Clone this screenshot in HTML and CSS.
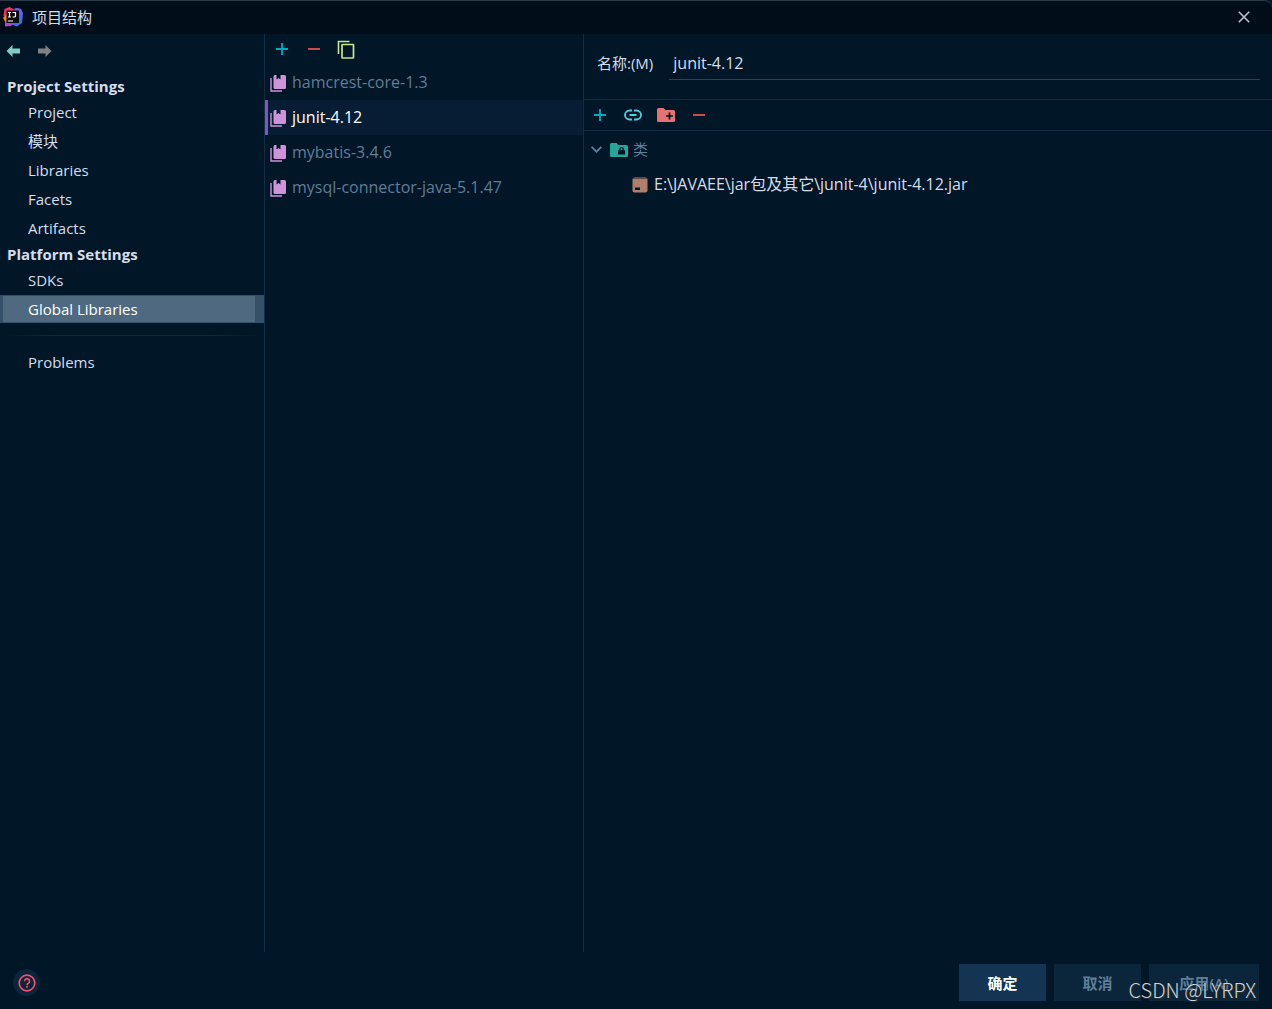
FILE: index.html
```html
<!DOCTYPE html>
<html lang="zh-CN">
<head>
<meta charset="utf-8">
<title>项目结构</title>
<meta name="viewport" content="width=device-width, initial-scale=1">
<link rel="stylesheet" href="styles.css">
</head>
<body>
<svg width="0" height="0" class="sprite" aria-hidden="true">
  <symbol id="plus" viewBox="0 0 12 12"><path d="M6 0v12M0 6h12" stroke="#00acc1" stroke-width="1.8"/></symbol>
  <symbol id="minus" viewBox="0 0 12 12"><path d="M0 6h12" stroke="#e5534f" stroke-width="1.8"/></symbol>
  <symbol id="library" viewBox="0 0 17 18"><path d="M1 4v13h11" fill="none" stroke="#ce93d8" stroke-width="1.4"/><path d="M5 1h1.500v4.500l2-1.500 2 1.500V1h4A1.500 1.500 0 0 1 16 2.500v11a1.500 1.500 0 0 1-1.500 1.500H5a1.500 1.500 0 0 1-1.500-1.500v-11A1.500 1.500 0 0 1 5 1z" fill="#ce93d8"/></symbol>
</svg>
<div class="dialog">
  <header class="titlebar">
    <svg class="logo" width="20" height="20" viewBox="0 0 20 20" aria-hidden="true">
      <path d="M1.500 2l5-2L13 3.500 9 13 .5 9z" fill="#fc3060"/>
      <path d="M0 11l4-4 3 8-4 1z" fill="#fc801d"/>
      <path d="M12 1l6 1 2 4-1 10-5 3.500-7-2.500z" fill="#3b6ff2"/>
      <path d="M13 1l5 1 1.500 6-6-2z" fill="#7c59e8"/>
      <path d="M2 15l3-1 5 3-2 2-6 .5z" fill="#b83bd2"/>
      <path d="M3.500 3.500h12.500v12.500H3.500z" fill="#090909"/>
      <path d="M5 5.500h3M6.500 5.500v4.500M5 10h3M9.500 5.500h3v3.500q0 1-1.300 1H9.500M5 14h5" fill="none" stroke="#fff" stroke-width="1.200"/>
    </svg>
    <h1 class="title">项目结构</h1>
    <button class="icon-btn" type="button" aria-label="关闭">
      <svg width="12" height="12" viewBox="0 0 12 12"><path d="M.8.800l10.400 10.400M11.200.800L.8 11.200" stroke="#b8c3cb" stroke-width="1.600"/></svg>
    </button>
  </header>

  <main class="panes">
    <nav class="sidebar">
      <div class="history">
        <button class="icon-btn" type="button" aria-label="后退"><svg width="14" height="12" viewBox="0 0 14 12"><path d="M0.500 6l6-6v3.500H14v5H6.500V12z" fill="#80cbc4"/></svg></button>
        <button class="icon-btn" type="button" aria-label="前进"><svg width="14" height="12" viewBox="0 0 14 12"><path d="M13.500 6l-6-6v3.500H0v5h7.500V12z" fill="#808080"/></svg></button>
      </div>
      <h2 class="group">Project Settings</h2>
      <ul class="links">
        <li><a class="link" href="#project">Project</a></li>
        <li><a class="link" href="#modules">模块</a></li>
        <li><a class="link" href="#libraries">Libraries</a></li>
        <li><a class="link" href="#facets">Facets</a></li>
        <li><a class="link" href="#artifacts">Artifacts</a></li>
      </ul>
      <h2 class="group">Platform Settings</h2>
      <ul class="links">
        <li><a class="link" href="#sdks">SDKs</a></li>
        <li><a class="link link-active" href="#global" aria-current="page">Global Libraries</a></li>
      </ul>
      <hr class="rule">
      <ul class="links">
        <li><a class="link" href="#problems">Problems</a></li>
      </ul>
    </nav>

    <section class="libraries">
      <div class="toolbar list-toolbar">
        <button class="icon-btn" type="button" aria-label="添加"><svg width="12" height="12"><use href="#plus"/></svg></button>
        <button class="icon-btn" type="button" aria-label="移除"><svg width="12" height="12"><use href="#minus"/></svg></button>
        <button class="icon-btn" type="button" aria-label="复制"><svg width="18" height="19" viewBox="0 0 18 19"><path d="M1.500 14V1.500h11" fill="none" stroke="#c3e88d" stroke-width="1.600"/><rect x="5" y="4.500" width="11.500" height="13.500" rx=".5" fill="none" stroke="#c3e88d" stroke-width="1.700"/></svg></button>
      </div>
      <ul class="rows">
        <li><a class="row" href="#hamcrest"><svg width="17" height="18"><use href="#library"/></svg><span>hamcrest-core-1.3</span></a></li>
        <li><a class="row row-active" href="#junit" aria-current="true"><svg width="17" height="18"><use href="#library"/></svg><span>junit-4.12</span></a></li>
        <li><a class="row" href="#mybatis"><svg width="17" height="18"><use href="#library"/></svg><span>mybatis-3.4.6</span></a></li>
        <li><a class="row" href="#mysql"><svg width="17" height="18"><use href="#library"/></svg><span>mysql-connector-java-5.1.47</span></a></li>
      </ul>
    </section>

    <section class="details">
      <div class="name-row">
        <label for="name">名称:(M)</label>
        <input class="name" id="name" type="text" value="junit-4.12">
      </div>
      <div class="toolbar file-toolbar">
        <button class="icon-btn" type="button" aria-label="添加"><svg width="12" height="12"><use href="#plus"/></svg></button>
        <button class="icon-btn" type="button" aria-label="指定文档 URL"><svg width="18" height="12" viewBox="0 0 18 12"><path d="M8 1.500H5.500a4.500 4.500 0 0 0 0 9H8M10 1.500h2.500a4.500 4.500 0 0 1 0 9H10M5.500 6h7" fill="none" stroke="#4dd0e1" stroke-width="1.800"/></svg></button>
        <button class="icon-btn" type="button" aria-label="排除目录"><svg width="18" height="14" viewBox="0 0 18 14"><path d="M1.500 0h5l2 2h8A1.500 1.500 0 0 1 18 3.500v9a1.500 1.500 0 0 1-1.500 1.500h-15A1.500 1.500 0 0 1 0 12.500v-11A1.500 1.500 0 0 1 1.500 0z" fill="#e57373"/><path d="M12.500 4.500v7M9 8h7" stroke="#011627" stroke-width="1.700"/></svg></button>
        <button class="icon-btn" type="button" aria-label="移除"><svg width="12" height="12"><use href="#minus"/></svg></button>
      </div>
      <ul class="tree">
        <li class="node node-group">
          <svg width="11" height="7" viewBox="0 0 11 7"><path d="M.6.800l4.900 4.900L10.400.800" fill="none" stroke="#5f7e97" stroke-width="1.800"/></svg>
          <svg width="18" height="14" viewBox="0 0 18 14"><path d="M1.500 0h5l2 2h8A1.500 1.500 0 0 1 18 3.500v9a1.500 1.500 0 0 1-1.500 1.500h-15A1.500 1.500 0 0 1 0 12.500v-11A1.500 1.500 0 0 1 1.500 0z" fill="#26a69a"/><path d="M8 7.200h7V11.500H8z" fill="#011627"/><path d="M9.900 8V6.200a1.600 1.600 0 0 1 3.200 0V8" fill="none" stroke="#011627" stroke-width="1.300"/></svg>
          <span>类</span>
        </li>
        <li class="node node-file">
          <svg width="16" height="16" viewBox="0 0 16 16"><rect x=".5" y=".5" width="15" height="15" rx="2" fill="#b07f6c"/><path d="M1 1.500h14" stroke="#5d4a47" stroke-width="1"/><path d="M3 10.500h5v2.500H3z" fill="#011627"/></svg>
          <span>E:\JAVAEE\jar包及其它\junit-4\junit-4.12.jar</span>
        </li>
      </ul>
    </section>
  </main>

  <footer class="footer">
    <button class="help" type="button" aria-label="帮助">
      <svg width="18" height="18" viewBox="0 0 18 18"><circle cx="9" cy="9" r="7.800" fill="none" stroke="#ef5370" stroke-width="1.700"/><path d="M6.500 7.200a2.500 2.500 0 1 1 4 2q-1.500 1-1.500 2" fill="none" stroke="#ef5370" stroke-width="1.600"/><path d="M9 12v1.700" stroke="#ef5370" stroke-width="1.700"/></svg>
    </button>
    <div class="actions">
      <button class="btn btn-primary" type="button">确定</button>
      <button class="btn" type="button">取消</button>
      <button class="btn btn-wide" type="button" disabled>应用(A)</button>
    </div>
    <span class="watermark">CSDN @LYRPX</span>
  </footer>
</div>
</body>
</html>
```
FILE: styles.css
```css
* { box-sizing: border-box; }

body {
  margin: 0;
  background: #011627;
  color: #d6deeb;
  font: 15px/20px "Open Sans", "Noto Sans CJK SC", sans-serif;
}

ul { list-style: none; margin: 0; padding: 0; }
a { color: inherit; text-decoration: none; }
svg { display: block; flex: none; }
.sprite { position: absolute; }

.dialog {
  display: flex;
  flex-direction: column;
  min-height: 100vh;
}

.titlebar {
  display: flex;
  align-items: center;
  gap: 9px;
  height: 34px;
  padding: 0 22px 2px 3px;
  border-top: 1px solid #2b3b45;
  border-top-right-radius: 8px;
  background: #010e1a;
}
.title { flex: 1; margin: 0; font-size: 15px; font-weight: 400; }

.icon-btn {
  display: flex;
  justify-content: center;
  padding: 0;
  border: 0;
  background: none;
}

.panes {
  display: grid;
  grid-template-columns: 265px 319px 1fr;
  flex: 1;
}

.sidebar { border-right: 1px solid #122d42; }
.history {
  display: flex;
  align-items: center;
  gap: 18px;
  height: 34px;
  padding: 0 6px;
  margin-bottom: 7px;
}
.group {
  margin: 0;
  padding: 0 7px;
  font-size: 15px;
  font-weight: 700;
  line-height: 23px;
}
.link {
  display: block;
  height: 28px;
  margin-bottom: 1px;
  padding: 0 25px;
  border: 1px solid transparent;
  border-width: 1px 9px 1px 3px;
  line-height: 26px;
}
.link-active {
  border-color: #34506a;
  background: #4f6a80;
  background-clip: padding-box;
  color: #fff;
}
.rule {
  height: 1px;
  margin: 12px 3px;
  border: 0;
  background: linear-gradient(90deg, transparent, #0b2942 20%, #0b2942 80%, transparent);
}

.toolbar { display: flex; align-items: center; }
.toolbar .icon-btn { width: 20px; }

.libraries { border-right: 1px solid #122d42; }
.list-toolbar { gap: 12px; height: 31px; padding: 0 7px 1px; }
.row {
  display: flex;
  align-items: center;
  gap: 5px;
  height: 35px;
  padding: 0 2px;
  border-left: 3px solid transparent;
  color: #5f7e97;
  font-size: 16px;
}
.row span { padding-bottom: 1px; }
.row-active {
  border-left-color: #7e57c2;
  background: #061d34;
  color: #fff;
}

.name-row {
  display: flex;
  align-items: center;
  gap: 16px;
  height: 65px;
  padding: 0 12px 8px 13px;
}
.name {
  flex: 1;
  min-width: 0;
  height: 34px;
  padding: 2px 4px 0;
  border: 0;
  border-bottom: 1px solid #084d81;
  background: none;
  color: inherit;
  font: inherit;
  font-size: 16px;
}
.file-toolbar {
  gap: 13px;
  height: 32px;
  padding: 0 6px;
  border: 1px solid #122d42;
  border-width: 1px 0;
}
.tree { padding-top: 1px; }
.node { display: flex; align-items: center; height: 35px; }
.node span { padding-bottom: 2px; }
.node-group { gap: 5px; padding-left: 7px; color: #5f7e97; }
.node-group svg + svg { margin-left: 3px; }
.node-file { gap: 6px; padding-left: 48px; font-size: 16px; }

.footer {
  position: relative;
  display: flex;
  align-items: center;
  justify-content: space-between;
  padding: 12px 13px 8px;
}
.help {
  display: grid;
  place-items: center;
  width: 27px;
  height: 27px;
  padding: 0;
  border: 0;
  border-radius: 50%;
  background: #0b253a;
}
.actions { display: flex; gap: 8px; }
.btn {
  width: 87px;
  height: 37px;
  padding: 0;
  border: 0;
  background: #0b253a;
  color: #5f7e97;
  font: inherit;
  font-weight: 600;
}
.btn-primary { background: #133453; color: #fff; font-weight: 700; }
.btn-wide { width: 110px; }
.watermark {
  position: absolute;
  right: 16px;
  bottom: 7px;
  color: #d0d4d8;
  font: 300 20px/24px "Noto Sans CJK SC", sans-serif;
  text-shadow: 1px 1px 1px #333;
}
```
